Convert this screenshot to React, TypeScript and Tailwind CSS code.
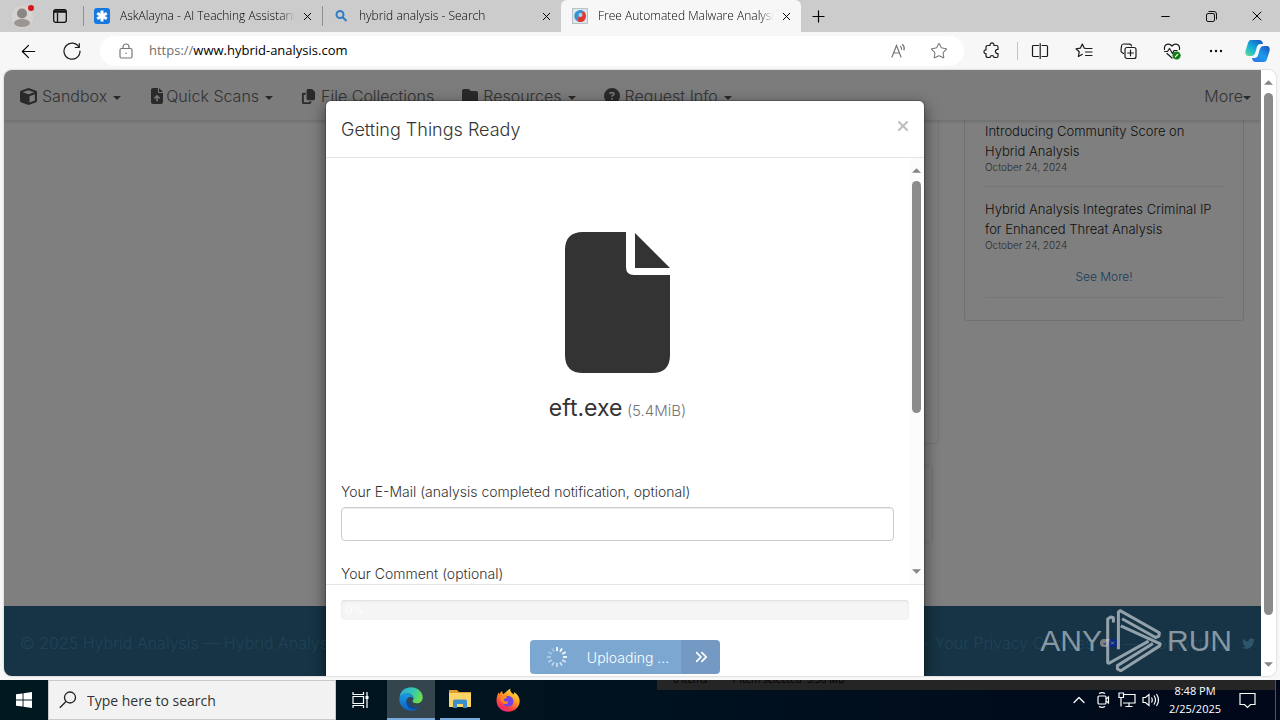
import { useState } from "react";
import type { ReactNode } from "react";
import { ArrowLeft, ChevronUp, Minus, Plus, Star, X } from "lucide-react";
import {
  FaAnglesRight,
  FaCircleQuestion,
  FaCopy,
  FaCube,
  FaFileArrowUp,
  FaFolder,
  FaTwitter,
} from "react-icons/fa6";

function Caret({ up = false, className = "" }: { up?: boolean; className?: string }) {
  return (
    <svg viewBox="0 0 8 4" className={className} fill="currentColor" aria-hidden="true">
      <path d={up ? "M0 4 4 0l4 4Z" : "M0 0h8L4 4Z"} />
    </svg>
  );
}

function Tab({ icon, title, active = false }: { icon: ReactNode; title: string; active?: boolean }) {
  return (
    <div
      className={
        active
          ? "flex w-60 items-center gap-2.5 self-stretch rounded-t-md bg-[#f7f7f7] pr-2 pl-[11px]"
          : "flex h-5 w-[239px] items-center gap-2.5 border-l border-[#8f8f8f] pr-2 pl-2.5"
      }
    >
      {icon}
      <span className="-mr-1 flex-1 overflow-hidden whitespace-nowrap text-xs font-light mask-r-from-92% mask-r-to-100%">
        {title}
      </span>
      <button type="button" aria-label="Close tab">
        <X size={13} strokeWidth={1.8} />
      </button>
    </div>
  );
}

function TitleBar() {
  return (
    <header className="flex h-8 shrink-0 items-center bg-[#cccccc] text-black">
      <div className="flex w-[83px] items-center gap-[17px] pl-3">
        <button type="button" aria-label="Profile">
          <svg width="24" height="24" viewBox="0 0 24 24">
            <circle cx="10" cy="13" r="11" fill="#d6d3d1" />
            <circle cx="10" cy="9.500" r="5" fill="#8a8683" />
            <ellipse cx="10" cy="19" rx="8" ry="4" fill="#999592" />
            <circle cx="19" cy="4" r="3" fill="#dc1414" />
          </svg>
        </button>
        <button type="button" aria-label="Tab actions">
          <svg width="14" height="14" viewBox="0 0 14 14" fill="none" stroke="#111" strokeWidth="1.300">
            <rect x=".7" y=".7" width="12.600" height="12.600" rx="2" />
            <path d="M1 2.500h12" strokeWidth="2.500" />
            <path d="M4.500 4v9" />
          </svg>
        </button>
      </div>
      <Tab
        title="AskAlayna - AI Teaching Assistant"
        icon={
          <svg width="16" height="16" viewBox="0 0 16 16">
            <rect width="16" height="16" rx="3" fill="#1478e0" />
            <path d="M8 2.500v11M3.200 5.200l9.600 5.600M12.800 5.200l-9.600 5.600" stroke="#fff" strokeWidth="3" />
          </svg>
        }
      />
      <Tab
        title="hybrid analysis - Search"
        icon={
          <svg width="16" height="16" viewBox="0 0 16 16" fill="none" stroke="#2f7cc4" strokeWidth="2">
            <circle cx="7" cy="6.500" r="3.500" />
            <path d="m9.500 9 4 4" />
          </svg>
        }
      />
      <Tab
        active
        title="Free Automated Malware Analysis"
        icon={
          <svg width="16" height="16" viewBox="0 0 16 16">
            <rect x=".5" y=".5" width="15" height="15" fill="#dce6ec" stroke="#b9c4ca" />
            <path d="M12 3.400A6 6 0 0 0 2.300 8c0 2.500 1.500 4.500 3.500 5.400 0-5 2-8 6.200-10Z" fill="#3193cf" />
            <path d="M12 3.400c3.500 3 2.200 9.600-2.500 10.600-1.500.3-2.800 0-3.700-.6 0-5 2-8 6.200-10Z" fill="#dc3a30" />
            <circle cx="8.500" cy="7" r="2" fill="#a8d8f4" />
          </svg>
        }
      />
      <button type="button" aria-label="New tab" className="ml-2">
        <Plus size={19} strokeWidth={1.500} />
      </button>
      <div className="ml-auto flex">
        <button type="button" aria-label="Minimize" className="grid w-[46px] place-items-center">
          <Minus size={13} strokeWidth={1.800} />
        </button>
        <button type="button" aria-label="Restore" className="grid w-[46px] place-items-center">
          <svg width="11" height="11" viewBox="0 0 11 11" fill="none" stroke="#111">
            <rect x=".5" y="2.500" width="8" height="8" rx="1.500" />
            <path d="M2.500.5h5.500a2.500 2.500 0 0 1 2.500 2.500v5.500" />
          </svg>
        </button>
        <button type="button" aria-label="Close" className="grid w-[46px] place-items-center">
          <X size={16} strokeWidth={1.500} />
        </button>
      </div>
    </header>
  );
}

function ToolButton({ label, children }: { label: string; children: ReactNode }) {
  return (
    <button type="button" aria-label={label} className="grid w-11 shrink-0 place-items-center">
      <svg width="18" height="18" viewBox="0 0 18 18" fill="none" stroke="#1b1b1b" strokeWidth="1.200" strokeLinejoin="round" strokeLinecap="round">
        {children}
      </svg>
    </button>
  );
}

function Toolbar() {
  return (
    <div className="flex h-[38px] shrink-0 items-center bg-[#f7f7f7]">
      <button type="button" aria-label="Back" className="grid w-11 place-items-center pl-3">
        <ArrowLeft size={21} strokeWidth={1.300} />
      </button>
      <div className="pl-1.5">
        <ToolButton label="Refresh">
          <path d="M16 5.300A8 8 0 1 0 17 9M16.300 1.500v4h-4" />
        </ToolButton>
      </div>
      <div className="ml-1.5 flex h-[30px] flex-1 items-center rounded-full bg-white pr-4 pl-[19px]">
        <svg width="14" height="16" viewBox="0 0 14 16" fill="none" stroke="#777" strokeWidth="1.200">
          <rect x="1" y="5.500" width="12" height="9.500" rx="1.500" />
          <path d="M4 5.500V4a3 3 0 0 1 6 0v1.500" />
          <circle cx="7" cy="10.200" r=".8" fill="#777" stroke="none" />
        </svg>
        <label htmlFor="address" className="ml-4 text-[13px] text-[#707070]">
          https://
        </label>
        <input
          id="address"
          defaultValue="www.hybrid-analysis.com"
          className="min-w-0 flex-1 text-[13px] text-black outline-none"
        />
        <button type="button" aria-label="Read aloud" className="mr-[22px]">
          <svg width="18" height="18" viewBox="0 0 18 18" fill="none" stroke="#777" strokeWidth="1.200" strokeLinecap="round">
            <path d="m2 15 4.500-11.500L11 15M3.700 11h5.700M10.500 4.300c1 1 1.300 2 1 3.200M12.500 2.500c1.600 1.600 2.200 3.600 1.500 5.500" />
          </svg>
        </button>
        <button type="button" aria-label="Add to favorites">
          <Star size={18} strokeWidth={1.400} color="#777" />
        </button>
      </div>
      <div className="flex items-center border-r border-[#c4c4c4] pr-[3px] pl-1.5">
        <ToolButton label="Extensions">
          <path d="M3 5.500C3 4 3.500 3.500 5 3.500h2c-.5-3.500 4.500-3.500 4 0h2.500c1 0 1.500.5 1.500 1.500v2.500c-3.500-.5-3.500 4.500 0 4v2.500c0 1-.5 1.500-1.500 1.500H11c.5-2.500-4.500-2.500-4 0H5c-1.500 0-2-.5-2-2v-2c-2.700.5-2.700-4 0-3.500Z" />
        </ToolButton>
      </div>
      <ToolButton label="Split screen">
        <path d="M7.500 3.500h-5a1 1 0 0 0-1 1v9a1 1 0 0 0 1 1h5M11 3.500h4.500a1 1 0 0 1 1 1v9a1 1 0 0 1-1 1H11M9.200 1.500v15" />
      </ToolButton>
      <ToolButton label="Favorites">
        <path d="M11 6.500 9.300 6.200 7.300 2 5.300 6.200 1 6.800l3.200 3L3.400 14.500l4-2.200M11 6.500h6M10.500 10h6.500M10.500 13.500h6.500" />
      </ToolButton>
      <ToolButton label="Collections">
        <path d="M4.500 11.500 3 10.500a2 2 0 0 1-1-2L2.500 4A2.300 2.300 0 0 1 5 2l5.500.2a2 2 0 0 1 2 1.600" />
        <rect x="6" y="5.500" width="11" height="11" rx="2" />
        <path d="M11.500 8.200v5.600M8.700 11h5.600" />
      </ToolButton>
      <ToolButton label="Browser essentials">
        <path d="M1.500 7.500C.8 1.500 6.500 1 9 4c2.500-3 8.200-2.500 7.500 3.500M1.500 9.500h3L6.500 6.500l3 5L11 8.500h3M4 11.500l5 4.500" />
        <circle cx="13.500" cy="13.500" r="3.800" fill="#107c10" stroke="#107c10" strokeWidth=".5" />
        <path d="m12.300 14.800 2.400-2.500" stroke="#fff" />
      </ToolButton>
      <ToolButton label="Settings and more">
        <g fill="#111" stroke="none">
          <circle cx="4" cy="9" r="1.200" />
          <circle cx="9" cy="9" r="1.200" />
          <circle cx="14" cy="9" r="1.200" />
        </g>
      </ToolButton>
      <button type="button" aria-label="Copilot" className="mr-2.5 ml-[7px] shrink-0">
        <svg width="25" height="24" viewBox="0 0 25 24">
          <defs>
            <linearGradient id="cpA" x1="0" y1="1" x2=".8" y2="0">
              <stop stopColor="#6fdc8c" />
              <stop offset=".45" stopColor="#16b5d8" />
              <stop offset="1" stopColor="#1560c8" />
            </linearGradient>
            <linearGradient id="cpB" x1="0" y1="1" x2="1" y2="0">
              <stop stopColor="#2f6fe8" />
              <stop offset=".5" stopColor="#1c9ae8" />
              <stop offset="1" stopColor="#1d4fc0" />
            </linearGradient>
          </defs>
          <path d="M6 1h8c2.500 0 3.300 1 4 4h-2.500c-2 0-3 1-3.600 3l-1.600 5.500C9.500 16 8.300 17 6 17H3.500C.8 17-.3 15 .5 12L3 4c.6-2 1.500-3 3-3Z" fill="url(#cpA)" />
          <path d="M19 23h-8c-2.500 0-3.300-1-4-4h2.500c2 0 3-1 3.600-3l1.600-5.500C15.500 8 16.700 7 19 7h2.500c2.700 0 3.800 2 3 5L22 20c-.6 2-1.500 3-3 3Z" fill="url(#cpB)" />
        </svg>
      </button>
    </div>
  );
}

function NavItem({ icon, label, caret = true }: { icon?: ReactNode; label: string; caret?: boolean }) {
  return (
    <a href="#menu" className="flex items-center whitespace-nowrap">
      {icon && <span className="mr-[5px] text-[#555]">{icon}</span>}
      {label}
      {caret && <Caret className={icon ? "mt-1 ml-1.5 h-1 w-2 text-[#555]" : "mt-1 h-1 w-2 text-[#555]"} />}
    </a>
  );
}

function SiteNav() {
  return (
    <nav className="z-10 flex h-[51px] shrink-0 items-center border-b border-[#e7e7e7] bg-[#f8f8f8] pt-0.5 pr-2.5 pl-4 text-[#666] shadow-sm">
      <div className="flex gap-7">
        <NavItem icon={<FaCube size={17} />} label="Sandbox" />
        <NavItem icon={<FaFileArrowUp size={16} className="-mr-1" />} label="Quick Scans" />
        <NavItem icon={<FaCopy size={15} />} label="File Collections" caret={false} />
        <NavItem icon={<FaFolder size={16} />} label="Resources" />
        <NavItem icon={<FaCircleQuestion size={16} />} label="Request Info" />
      </div>
      <div className="ml-auto">
        <NavItem label="More" />
      </div>
    </nav>
  );
}

function NewsItem({ title, className = "" }: { title: string; className?: string }) {
  return (
    <article className={className}>
      <a href="#news" className="block text-[13px] leading-5 text-[#222]">
        {title}
      </a>
      <time className="block text-[10px] leading-3 text-[#555]">October 24, 2024</time>
    </article>
  );
}

function SitePage() {
  return (
    <div className="flex h-full flex-col overflow-hidden bg-white">
      <SiteNav />
      <main className="flex min-h-0 flex-1 items-start justify-end gap-[25px] pr-[17px]">
        <div className="flex w-[600px] flex-col gap-[21px]">
          <section className="h-[323px] rounded-b border border-t-0 border-[#e8e8e8]" />
          <section className="mr-1.5 h-[78px] rounded border border-[#e8e8e8]" />
        </div>
        <aside className="w-[280px] rounded-b border border-t-0 border-[#e0e0e0] px-5 pb-[22px]">
          <NewsItem
            title="Introducing Community Score on Hybrid Analysis"
            className="border-b border-[#eaeaea] pb-[13px]"
          />
          <NewsItem
            title="Hybrid Analysis Integrates Criminal IP for Enhanced Threat Analysis"
            className="pt-3"
          />
          <div className="border-b border-[#eaeaea] pt-4 pb-2.5 text-center text-xs leading-5 text-[#337ab7]">
            <a href="#blog">See More!</a>
          </div>
        </aside>
      </main>
      <footer className="flex h-[70px] shrink-0 items-center justify-between bg-[#2c688a] pt-1 pr-1.5 pl-4 whitespace-nowrap text-[#3f86ad]">
        <p>© 2025 Hybrid Analysis — Hybrid Analysis</p>
        <p className="flex items-center gap-1.5">
          <span>—</span>
          <a href="#privacy">Your Privacy Choices</a>
          <svg width="18" height="8" viewBox="0 0 18 8">
            <path d="M4 0h6L7 8H4a4 4 0 0 1 0-8Z" fill="#fff" />
            <path d="M10 0h4a4 4 0 0 1 0 8H7Z" fill="#1550ff" />
            <path d="m3.500 4 1.500 1.500L7.500 2.500" stroke="#1550ff" fill="none" />
            <path d="m11 2.500 3 3m0-3-3 3" stroke="#fff" />
          </svg>
          <span>—</span>
          <a href="#contact">Contact Us</a>
          <FaTwitter size={13} className="ml-2 text-[#5aaad6]" />
        </p>
      </footer>
    </div>
  );
}

function Spinner() {
  const spokes = Array.from({ length: 12 }, (_, i) => i);
  return (
    <svg width="22" height="22" viewBox="-11 -11 22 22" aria-hidden="true">
      {spokes.map((i) => (
        <line key={i} y1="-6" y2="-10" stroke="#fff" strokeWidth="1.800" opacity={i < 4 ? 0.95 : 1 - i * 0.065} transform={`rotate(${i * 30})`} />
      ))}
    </svg>
  );
}

function Scrollbar({ className, thumb }: { className: string; thumb: string }) {
  return (
    <div className={`flex shrink-0 flex-col items-center text-[#858585] ${className}`}>
      <Caret up className="h-[5px] w-[9px] shrink-0" />
      <div className="flex min-h-0 w-full flex-1 flex-col items-center py-2">
        <div className={`rounded-full bg-[#8b8b8b] ${thumb}`} />
      </div>
      <Caret className="h-[5px] w-[9px] shrink-0" />
    </div>
  );
}

function UploadDialog() {
  const [email, setEmail] = useState("");
  return (
    <div
      role="dialog"
      aria-labelledby="dialog-title"
      className="flex w-[600px] flex-1 flex-col overflow-hidden rounded-t-md border border-b-0 border-black/20 bg-white bg-clip-padding text-[#333] shadow-[0_5px_15px_rgba(0,0,0,.5)]"
    >
      <div className="flex items-start justify-between border-b border-[#e5e5e5] px-[15px] pt-4 pb-3.5">
        <h4 id="dialog-title" className="text-lg leading-[26px]">
          Getting Things Ready
        </h4>
        <button type="button" aria-label="Close" className="mt-px -mr-0.5 text-[#bdbdbd]">
          <X size={16} strokeWidth={3} />
        </button>
      </div>
      <div className="flex min-h-0 flex-1">
        <div className="flex-1 overflow-hidden px-[15px] pt-[74px]">
          <svg viewBox="0 0 105 141" className="mx-auto h-[141px] w-[105px]" fill="#333" aria-hidden="true">
            <path d="M18 0h43v35q0 8 8 8h36v80q0 18-18 18H18Q0 141 0 123V18Q0 0 18 0Z" />
            <path d="M70 1l35 35H70Z" />
          </svg>
          <p className="mt-[19px] text-center leading-8">
            <span className="text-[23px] font-normal">eft.exe</span>{" "}
            <small className="text-[15px] text-[#777]">(5.4MiB)</small>
          </p>
          <label htmlFor="email" className="mt-[55px] mb-[5px] block text-sm leading-5">
            Your E-Mail (analysis completed notification, optional)
          </label>
          <input
            id="email"
            type="email"
            value={email}
            onChange={(e) => setEmail(e.target.value)}
            className="block h-[34px] w-full rounded border border-[#ccc] px-3 text-sm shadow-[inset_0_1px_1px_rgba(0,0,0,.075)] outline-none"
          />
          <label htmlFor="comment" className="mt-[23px] block text-sm leading-5">
            Your Comment (optional)
          </label>
          <textarea id="comment" className="h-20 w-full rounded border border-[#ccc]" />
        </div>
        <Scrollbar className="w-[15px] bg-[#fcfcfc] py-2.5" thumb="h-[61%] w-[9px]" />
      </div>
      <div className="border-t border-[#e5e5e5] px-[15px] pt-[15px] pb-0.5">
        <div className="h-5 overflow-hidden rounded bg-[#f5f5f5] pl-1 text-xs leading-5 text-white shadow-[inset_0_1px_2px_rgba(0,0,0,.1)]">
          0%
        </div>
        <button type="button" className="mx-auto mt-5 flex h-[34px] items-stretch overflow-hidden rounded text-sm text-white">
          <span className="flex items-center gap-[19px] bg-[#7ba7d0] pr-3 pl-4">
            <Spinner />
            <span className="pt-0.5">Uploading ...</span>
          </span>
          <span className="grid w-[39px] place-items-center bg-[#7499c2]">
            <FaAnglesRight size={14} />
          </span>
        </button>
      </div>
    </div>
  );
}

function Watermark() {
  return (
    <div className="pointer-events-none absolute right-11 bottom-1 flex items-center gap-1 font-['Liberation_Sans',sans-serif] text-[30px] leading-[63px] font-normal text-[#d5dbe0]/60">
      <span>ANY</span>
      <svg width="57" height="63" viewBox="240 28 170 188" fill="none" stroke="#d5dbe0" strokeOpacity=".65" strokeWidth="9" strokeLinejoin="round">
        <path d="M262 68V54l-8-2-9 6v130l4 2 118-66" />
        <path d="M277 148V37l5-4 117 66-1 10-10 4-100-56" />
        <path d="m284 78 118 54-2 6-116 74-10-5v-10l106-66" />
      </svg>
      <span>RUN</span>
    </div>
  );
}

function TrayIcon({ children, label }: { children: ReactNode; label: string }) {
  return (
    <button type="button" aria-label={label} className="grid w-6 place-items-center">
      <svg width="18" height="18" viewBox="0 0 18 18" fill="none" stroke="#fff" strokeWidth="1.200">
        {children}
      </svg>
    </button>
  );
}

function Taskbar() {
  return (
    <div className="relative flex h-10 shrink-0 items-stretch bg-linear-to-r from-[#001820] via-[#00121f] to-[#00081a] text-white">
      <div className="absolute top-0 right-1 left-[657px] flex h-2.5 items-end gap-6 overflow-hidden bg-[#252525] pb-1.5 pl-4 text-[10px] leading-[10px] text-black">
        <span>6 items</span>
        <span>1 item selected&nbsp; 5.50 MB</span>
      </div>
      <button type="button" aria-label="Start" className="grid w-12 place-items-center">
        <svg width="16" height="16" viewBox="0 0 16 16" fill="#fff">
          <path d="M0 2.300 6.600 1.400v6.100H0ZM7.500 1.200 16 0v7.500H7.500ZM0 8.400h6.600v6.200L0 13.700ZM7.500 8.400H16V16l-8.500-1.200Z" />
        </svg>
      </button>
      <label className="flex w-72 items-center gap-2.5 border border-[#c8c8c8] bg-[#f2f2f2] pl-2.5 text-[#222]">
        <svg width="18" height="18" viewBox="0 0 18 18" fill="none" stroke="#222" strokeWidth="1.300">
          <circle cx="11" cy="6.500" r="5.500" />
          <path d="M7 10.500.8 16.700" />
        </svg>
        <input aria-label="Search" placeholder="Type here to search" className="min-w-0 flex-1 pt-0.5 text-sm outline-none placeholder:text-[#333]" />
      </label>
      <button type="button" aria-label="Task view" className="grid w-[49px] place-items-center">
        <svg width="17" height="16" viewBox="0 0 17 16" fill="none" stroke="#fff" strokeWidth="1.200">
          <path d="M1 0v2.500h10.500V0M1 16v-2.500h10.500V16M1 4.500h10.500v7H1ZM15 0v16" />
          <path d="M15 4v3" strokeWidth="3" />
        </svg>
      </button>
      <button type="button" aria-label="Microsoft Edge" className="ml-0.5 grid w-12 place-items-center border-b-2 border-[#76a9dc] bg-[#34454d]">
        <svg width="24" height="24" viewBox="0 0 24 24">
          <defs>
            <linearGradient id="edA" x1="0" y1="0" x2="1" y2=".4">
              <stop stopColor="#2aa8e0" />
              <stop offset=".6" stopColor="#35c8b0" />
              <stop offset="1" stopColor="#66dd55" />
            </linearGradient>
            <linearGradient id="edB" x1="0" y1="0" x2="0" y2="1">
              <stop stopColor="#1a9be0" />
              <stop offset="1" stopColor="#1060c0" />
            </linearGradient>
          </defs>
          <path d="M.5 10C1.500 4 6 .3 12 .3c6.500 0 11.700 4.500 11.700 10 0 4-2.800 6-6 6-2.500 0-4.200-.8-4.200-2 0-.8 1-1 1-2.800C14.500 8.500 12 6.500 8.500 6.500 5 6.500 2 8 .5 10Z" fill="url(#edA)" />
          <path d="M.3 12C.5 8 4.500 6 8.500 6.500c3.500.3 6 2.500 6 5-1-1.200-2-1.500-3-1.500-2.500 0-4 2-4 4.500 0 4.500 4 8 9 7.300 2-.3 3.800-1.300 4.800-2.300C19.500 22 16 23.700 12 23.700 5.500 23.700.1 18.500.3 12Z" fill="url(#edB)" />
          <path d="M8.500 11.500c-2.500 3.500-.8 9 4 10.300 3.500.8 7-.3 8.800-2.300-5 2.500-12.300 0-12.800-8Z" fill="#0c4a9a" />
        </svg>
      </button>
      <button type="button" aria-label="File Explorer" className="ml-[5px] grid w-10 place-items-center border-b-2 border-[#76a9dc]">
        <svg width="22" height="20" viewBox="0 0 22 20">
          <path d="M0 1h8l2 2h12v4H0Z" fill="#e0a030" />
          <path d="M0 4h22v14H0Z" fill="#fbd667" />
          <path d="M4 19v-7q0-1.500 1.500-1.500h11q1.500 0 1.500 1.500v7h-4v-4H8v4Z" fill="#3c8fcc" />
        </svg>
      </button>
      <button type="button" aria-label="Firefox" className="ml-4 grid place-items-center">
        <svg width="24" height="24" viewBox="0 0 24 24">
          <defs>
            <linearGradient id="ffA" x1=".8" y1="0" x2=".2" y2="1">
              <stop stopColor="#fff04a" />
              <stop offset=".4" stopColor="#ff9a22" />
              <stop offset=".75" stopColor="#ff3b46" />
              <stop offset="1" stopColor="#e0208a" />
            </linearGradient>
          </defs>
          <path d="M14.500.5c-1 3 1 4 3.500 6 .3-1 0-2-.3-2.500C21.500 6 23.700 9.500 23.700 13c0 6-5 10.700-11.500 10.700S.5 19 .5 12.700C.5 9.500 1.300 6.500 2.800 4.200c0 1 .2 1.600.5 2C4.200 4.500 5.200 3.500 6.300 3c-.2 1.500.2 2.500 1 3 2-1 4.700-4.300 7.200-5.500Z" fill="url(#ffA)" />
          <path d="M7 10.500c2-.5 3-2 4.500-2.500 4 0 6 2.500 6 5.500s-2.500 5-5.500 5-5.500-2-5.500-5c0-1 .2-2 .5-3Z" fill="#7542e5" />
          <path d="M4.500 8.500C7 7 10 7.500 11.500 9.500c-2 .3-2.500 1.500-4 2 .5 2 2.500 2.500 4 1.700 1.500.8 0 3.300-3 2.800-3-.6-4.500-4-4-7.500Z" fill="#ff8a24" />
        </svg>
      </button>
      <div className="relative z-10 ml-auto flex items-center">
        <button type="button" aria-label="Show hidden icons" className="grid w-6 place-items-center">
          <ChevronUp size={20} strokeWidth={1.500} />
        </button>
        <TrayIcon label="Meet now">
          <rect x="4" y="5" width="8" height="8" rx="1" />
          <path d="m12 8 2.500-2v6L12 10M5 2.500q3-1.800 6 0M5 15.500q3 1.800 6 0" />
        </TrayIcon>
        <TrayIcon label="Network">
          <path d="M5.500 3.500h11.500v8.500H5M11 12v3M7.500 15.500h7M1 2h4.500v4.500H1ZM3 6.500v9" />
        </TrayIcon>
        <TrayIcon label="Volume">
          <path d="M1 6.500h2.500L7 3.500v11l-3.500-3H1ZM9.500 6.500q1.500 2.500 0 5M12 4.500q3 4.500 0 9M14.500 3q4 6 0 12" />
        </TrayIcon>
        <time className="w-16 text-center text-[11px] leading-[18px]">
          8:48 PM
          <br />
          2/25/2025
        </time>
        <button type="button" aria-label="Notifications" className="mr-[19px] ml-3 grid w-[17px] place-items-center">
          <svg width="17" height="17" viewBox="0 0 17 17" fill="none" stroke="#fff" strokeWidth="1.200">
            <path d="M1 1.500h15v11h-4.500L8.500 15.500l-3-3H1Z" />
          </svg>
        </button>
        <div className="mr-1 h-10 border-l border-[#4b5560]" />
      </div>
    </div>
  );
}

export default function App() {
  return (
    <div className="flex h-screen flex-col overflow-hidden bg-[#f7f7f7] font-['Open_Sans',sans-serif]">
      <TitleBar />
      <Toolbar />
      <div className="relative mx-1 mb-1 flex min-h-0 flex-1 overflow-hidden rounded-lg bg-white font-['Inter',sans-serif] text-base font-light shadow-[0_0_2px_rgba(0,0,0,.3)]">
        <div className="relative min-w-0 flex-1">
          <SitePage />
          <div className="absolute inset-0 z-20 flex flex-col items-center bg-black/50 pt-[30px] pr-[15px]">
            <UploadDialog />
          </div>
        </div>
        <Scrollbar className="w-[15px] bg-white pt-2.5 pb-[9px]" thumb="h-[93%] w-[9px]" />
        <div className="absolute right-0 bottom-0 z-30">
          <Watermark />
        </div>
      </div>
      <Taskbar />
    </div>
  );
}
